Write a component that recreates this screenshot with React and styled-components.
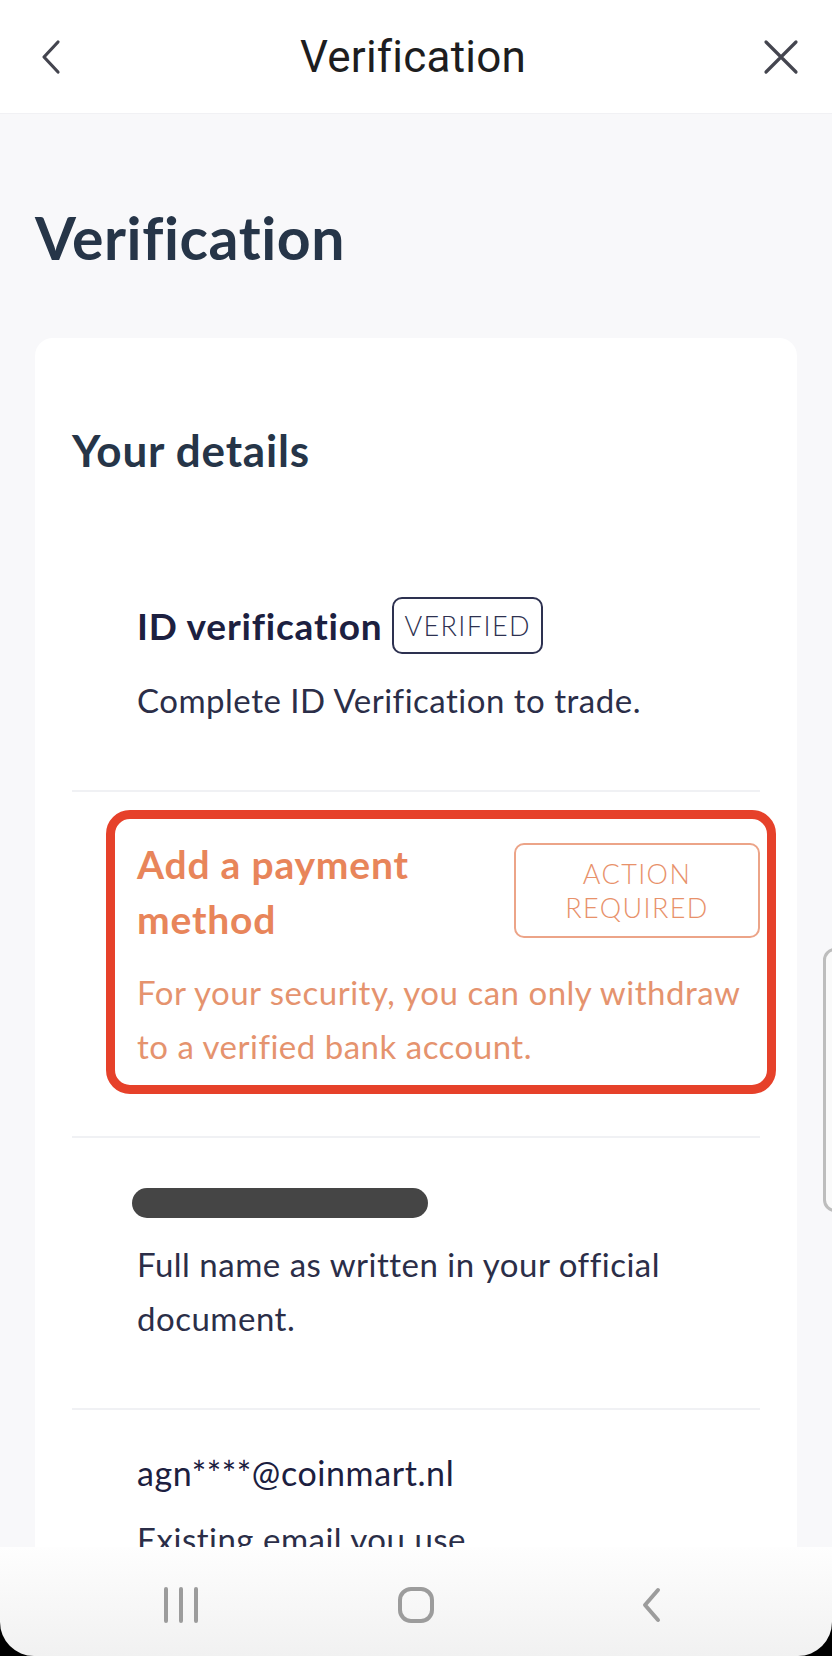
import React from 'react';
import styled, { createGlobalStyle } from 'styled-components';

const GlobalStyle = createGlobalStyle`
  html, body {
    margin: 0;
    padding: 0;
    background: #000;
  }

  * {
    box-sizing: border-box;
  }
`;

const navy = '#263548';
const ink = '#1c2040';
const orange = '#e8855a';

const Screen = styled.div`
  position: relative;
  width: 832px;
  height: 1656px;
  overflow: hidden;
  display: flex;
  flex-direction: column;
  background: #000;
`;

const TopBar = styled.header`
  flex: 0 0 114px;
  display: flex;
  align-items: center;
  justify-content: space-between;
  padding: 0 32px 0 38px;
  background: #fff;
  border-bottom: 1px solid #f1f1f4;

  h2 {
    margin: 0;
    font-family: Roboto, 'Liberation Sans', sans-serif;
    font-weight: 400;
    font-size: 44px;
    color: #1d1d20;
    letter-spacing: 0.2px;
  }

  svg {
    display: block;
  }
`;

const Content = styled.main`
  flex: 1;
  overflow: hidden;
  padding: 0 35px;
  background: #f8f8fa;
  font-family: Lato, 'Liberation Sans', sans-serif;
`;

const PageTitle = styled.h1`
  margin: 96px 0 72px;
  font-size: 59px;
  line-height: 56px;
  font-weight: 700;
  color: ${navy};
  letter-spacing: 0.6px;
`;

const Card = styled.section`
  background: #fff;
  border-radius: 18px;
  padding: 91px 37px 0;
`;

const CardTitle = styled.h3`
  margin: 0 0 81px;
  font-size: 44px;
  line-height: 42px;
  font-weight: 700;
  color: ${navy};
  letter-spacing: 0.8px;
`;

const Row = styled.div`
  position: relative;
  padding: ${({ last }) => (last ? '43px' : '45px')} 0 63px 65px;
  border-bottom: ${({ last }) => (last ? 'none' : '2px solid #f0f1f4')};

  &::after {
    content: '';
    display: ${({ highlighted }) => (highlighted ? 'block' : 'none')};
    position: absolute;
    top: 18px;
    left: 34px;
    right: -16px;
    bottom: 42px;
    border: 9px solid #e6412a;
    border-radius: 24px;
    pointer-events: none;
  }
`;

const RowHead = styled.div`
  display: flex;
  align-items: ${({ stacked }) => (stacked ? 'flex-start' : 'center')};
  justify-content: ${({ stacked }) => (stacked ? 'space-between' : 'flex-start')};
  gap: 10px;
`;

const RowTitle = styled.div`
  font-size: ${({ warn }) => (warn ? '39px' : '37px')};
  line-height: 55px;
  font-weight: 700;
  letter-spacing: ${({ warn }) => (warn ? '0.8px' : '0.8px')};
  color: ${({ warn }) => (warn ? orange : ink)};
  max-width: ${({ warn }) => (warn ? '320px' : 'none')};
`;

const Badge = styled.div`
  flex: 0 0 auto;
  display: flex;
  align-items: center;
  justify-content: center;
  text-align: center;
  width: ${({ warn }) => (warn ? '246px' : 'auto')};
  height: ${({ warn }) => (warn ? '95px' : '57px')};
  margin-top: ${({ warn }) => (warn ? '6px' : '0')};
  padding: 0 10px;
  border: 2px solid ${({ warn }) => (warn ? '#eca488' : '#2d3150')};
  border-radius: 10px;
  font-size: 27px;
  line-height: 34px;
  font-weight: 300;
  letter-spacing: 1.4px;
  text-transform: uppercase;
  color: ${({ warn }) => (warn ? '#e8916a' : '#2d3150')};
`;

const Value = styled.div`
  font-size: 34px;
  line-height: 40px;
  letter-spacing: 0.6px;
  color: ${ink};
`;

const Redacted = styled.div`
  width: 296px;
  height: 30px;
  margin: 5px 0 0 -5px;
  border-radius: 15px;
  background: #454545;
`;

const Description = styled.p`
  margin: ${({ warn }) => (warn ? '18px' : '19px')} 0 0;
  font-size: 33px;
  line-height: 54px;
  font-weight: 400;
  letter-spacing: 0.5px;
  color: ${({ warn }) => (warn ? '#e5936e' : '#2b2e48')};
`;

const NavBar = styled.nav`
  flex: 0 0 109px;
  display: grid;
  grid-template-columns: repeat(3, 235px);
  justify-content: center;
  justify-items: center;
  align-items: center;
  padding-top: 6px;
  background: linear-gradient(#fefefe, #f1f1f1);
  border-radius: 0 0 34px 34px;

  svg {
    display: block;
  }
`;

const EdgeHandle = styled.div`
  position: absolute;
  top: 948px;
  left: 823px;
  width: 30px;
  height: 264px;
  border: 3px solid #bdbdbd;
  border-radius: 12px;
  background: #fafafa;
`;

const BackIcon = () => (
  <svg width="26" height="36" viewBox="0 0 26 36" fill="none">
    <path d="M20 3 L6 18 L20 33" stroke="#44454f" strokeWidth="3.2" strokeLinecap="round" strokeLinejoin="round" />
  </svg>
);

const CloseIcon = () => (
  <svg width="38" height="38" viewBox="0 0 38 38" fill="none">
    <path d="M4 4 L34 34 M34 4 L4 34" stroke="#44454f" strokeWidth="3.2" strokeLinecap="round" />
  </svg>
);

const RecentsIcon = () => (
  <svg width="38" height="36" viewBox="0 0 38 36" fill="none">
    <path d="M4 2 V34 M19 2 V34 M34 2 V34" stroke="#9c9c9c" strokeWidth="4" strokeLinecap="round" />
  </svg>
);

const HomeIcon = () => (
  <svg width="38" height="38" viewBox="0 0 38 38" fill="none">
    <rect x="3" y="3" width="32" height="32" rx="11" stroke="#9c9c9c" strokeWidth="4" />
  </svg>
);

const NavBackIcon = () => (
  <svg width="26" height="36" viewBox="0 0 26 36" fill="none">
    <path d="M20 3 L7 18 L20 33" stroke="#9c9c9c" strokeWidth="4" strokeLinecap="round" strokeLinejoin="round" />
  </svg>
);

const App = () => (
  <>
    <GlobalStyle />
    <Screen>
      <TopBar>
        <BackIcon />
        <h2>Verification</h2>
        <CloseIcon />
      </TopBar>
      <Content>
        <PageTitle>Verification</PageTitle>
        <Card>
          <CardTitle>Your details</CardTitle>
          <Row>
            <RowHead>
              <RowTitle>ID verification</RowTitle>
              <Badge>Verified</Badge>
            </RowHead>
            <Description>Complete ID Verification to trade.</Description>
          </Row>
          <Row highlighted>
            <RowHead stacked>
              <RowTitle warn>Add a payment method</RowTitle>
              <Badge warn>Action required</Badge>
            </RowHead>
            <Description warn>
              For your security, you can only withdraw to a verified bank account.
            </Description>
          </Row>
          <Row>
            <Redacted />
            <Description>Full name as written in your official document.</Description>
          </Row>
          <Row last>
            <Value>agn****@coinmart.nl</Value>
            <Description>Existing email you use.</Description>
          </Row>
        </Card>
      </Content>
      <NavBar>
        <RecentsIcon />
        <HomeIcon />
        <NavBackIcon />
      </NavBar>
      <EdgeHandle />
    </Screen>
  </>
);

export default App;
